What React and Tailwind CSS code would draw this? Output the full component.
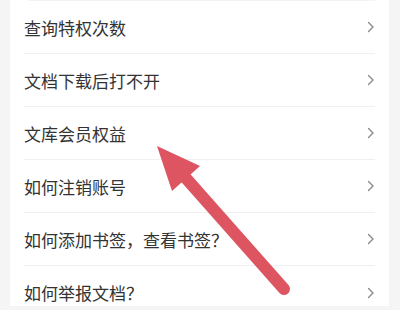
import React from "react";

const items = [
  "查询特权次数",
  "文档下载后打不开",
  "文库会员权益",
  "如何注销账号",
  "如何添加书签，查看书签？",
  "如何举报文档？",
];

function Chevron() {
  return (
    <svg width="8" height="12" viewBox="0 0 8 12" className="shrink-0">
      <path
        d="M1.5 1.5 L6 6 L1.5 10.5"
        fill="none"
        stroke="#8a8a8a"
        strokeWidth="1.4"
        strokeLinecap="round"
        strokeLinejoin="round"
      />
    </svg>
  );
}

export default function App() {
  return (
    <div
      className="relative w-[400px] h-[310px] overflow-hidden bg-[#f5f5f5] px-[10px] pr-[11px]"
      style={{ fontFamily: '"Noto Sans CJK SC", "Noto Sans", sans-serif' }}
    >
      <div className="bg-white h-[306px] pl-[14px] pr-[14px]">
        <div className="border-t border-[#f3f3f3] ml-[4px]" />
        {items.map((t, i) => (
          <div
            key={t}
            className={
              "flex items-center justify-between h-[53px] " +
              (i < items.length - 1 ? "border-b border-[#f0f0f0]" : "")
            }
          >
            <span className="text-[17px] text-[#333333] leading-none">{t}</span>
            <Chevron />
          </div>
        ))}
      </div>

      {/* red annotation arrow */}
      <svg
        className="absolute inset-0 pointer-events-none"
        width="400"
        height="310"
        viewBox="0 0 400 310"
      >
        <line
          x1="184"
          y1="176"
          x2="284"
          y2="289"
          stroke="#dc5561"
          strokeWidth="12"
          strokeLinecap="round"
        />
        <polygon points="157,146 200,166 172,191" fill="#dc5561" />
      </svg>
    </div>
  );
}
